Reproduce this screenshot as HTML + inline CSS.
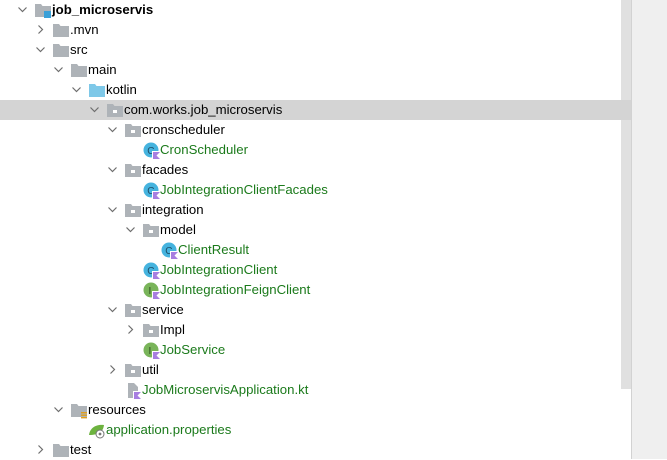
<!DOCTYPE html>
<html><head><meta charset="utf-8"><style>
body{margin:0;width:667px;height:459px;background:#fff;position:relative;overflow:hidden;font-family:"Segoe UI","Liberation Sans",sans-serif;font-size:13.2px;}
.row{position:absolute;left:0;height:20px;width:631px;}
.sel{background:#d4d4d4;}
.t{position:absolute;top:2px;line-height:16px;color:#000;white-space:nowrap;}
.g{color:#1b7a1b;}
.b{font-weight:bold;}
svg{position:absolute;}
#sb{position:absolute;left:621px;top:0;width:10px;height:389px;background:#e0e0e0;}
#rp{position:absolute;left:631px;top:0;width:36px;height:459px;background:#efefef;border-left:1px solid #d2d2d2;}
</style></head><body>
<div id="sb"></div><div id="rp"></div>
<div id="tree"></div>
<script>
const rows=[
[0,'d','mod','job_microservis','b'],
[1,'r','f','.mvn'],
[1,'d','f','src'],
[2,'d','f','main'],
[3,'d','kf','kotlin'],
[4,'d','p','com.works.job_microservis','','sel'],
[5,'d','p','cronscheduler'],
[6,'','c','CronScheduler','g'],
[5,'d','p','facades'],
[6,'','c','JobIntegrationClientFacades','g'],
[5,'d','p','integration'],
[6,'d','p','model'],
[7,'','c','ClientResult','g'],
[6,'','c','JobIntegrationClient','g'],
[6,'','i','JobIntegrationFeignClient','g'],
[5,'d','p','service'],
[6,'r','p','Impl'],
[6,'','i','JobService','g'],
[5,'r','p','util'],
[5,'','kt','JobMicroservisApplication.kt','g'],
[2,'d','res','resources'],
[3,'','prop','application.properties','g'],
[1,'r','f','test']
];
function icon(k){
 const fold='<path d="M0 2h6l1.5 2H16v11H0z" fill="#aeb3b8"/>';
 switch(k){
 case 'f':return fold;
 case 'kf':return '<path d="M0 2h6l1.5 2H16v11H0z" fill="#7ec8e8"/>';
 case 'p':return fold+'<rect x="6" y="8" width="4" height="3" fill="#fff"/>';
 case 'mod':return fold+'<rect x="9" y="9" width="7" height="7" fill="#3aa0d8"/>';
 case 'res':return fold+'<rect x="10" y="10" width="6" height="1.4" fill="#e0a020"/><rect x="10" y="12.5" width="6" height="1.4" fill="#e0a020"/><rect x="10" y="15" width="6" height="1.4" fill="#e0a020"/>';
 case 'c':return '<circle cx="8" cy="8" r="7.5" fill="#45b3de"/><text x="4.3" y="12" font-size="10" fill="#1d4c66" font-family="Liberation Sans">C</text><path d="M9 9h8v8H9z" fill="#fff"/><path d="M10 10h7l-3.5 3.5 3.5 3.5h-7z" fill="#a77ee0"/>';
 case 'i':return '<circle cx="8" cy="8" r="7.5" fill="#79b45a"/><text x="5.5" y="12" font-size="10" fill="#2c4a1d" font-family="Liberation Sans">I</text><path d="M9 9h8v8H9z" fill="#fff"/><path d="M10 10h7l-3.5 3.5 3.5 3.5h-7z" fill="#a77ee0"/>';
 case 'kt':return '<path d="M3 1h6l4 4v11H3z" fill="#aeb3b8"/><path d="M8 9h8v8H8z" fill="#fff"/><path d="M9 10h7l-3.5 3.5 3.5 3.5H9z" fill="#a77ee0"/>';
 case 'prop':return '<path d="M0 13 C1 5 8 2 15 3 C14 10 10 13 0 13z" fill="#6db33f"/><circle cx="11" cy="12" r="4" fill="#fff" stroke="#777" stroke-width="1"/><circle cx="11" cy="12" r="1.4" fill="#777"/>';
 }
}
let h='';
rows.forEach((r,i)=>{
 const [L,a,k,t,c,s]=r;const y=i*20;
 h+=`<div class="row ${s||''}" style="top:${y}px">`;
 const ax=18+18*L;
 if(a==='d')h+=`<svg style="left:${ax}px;top:6px" width="9" height="8"><path d="M0.5 1.5L4.5 5.5L8.5 1.5" stroke="#6e6e6e" fill="none" stroke-width="1.2"/></svg>`;
 if(a==='r')h+=`<svg style="left:${ax+1}px;top:5px" width="8" height="10"><path d="M1.5 0.5L5.5 4.5L1.5 8.5" stroke="#6e6e6e" fill="none" stroke-width="1.2"/></svg>`;
 h+=`<svg style="left:${35+18*L}px;top:2px" width="17" height="17">${icon(k)}</svg>`;
 h+=`<div class="t ${c||''}" style="left:${52+18*L}px">${t}</div></div>`;
});
document.getElementById('tree').innerHTML=h;
</script>
</body></html>
